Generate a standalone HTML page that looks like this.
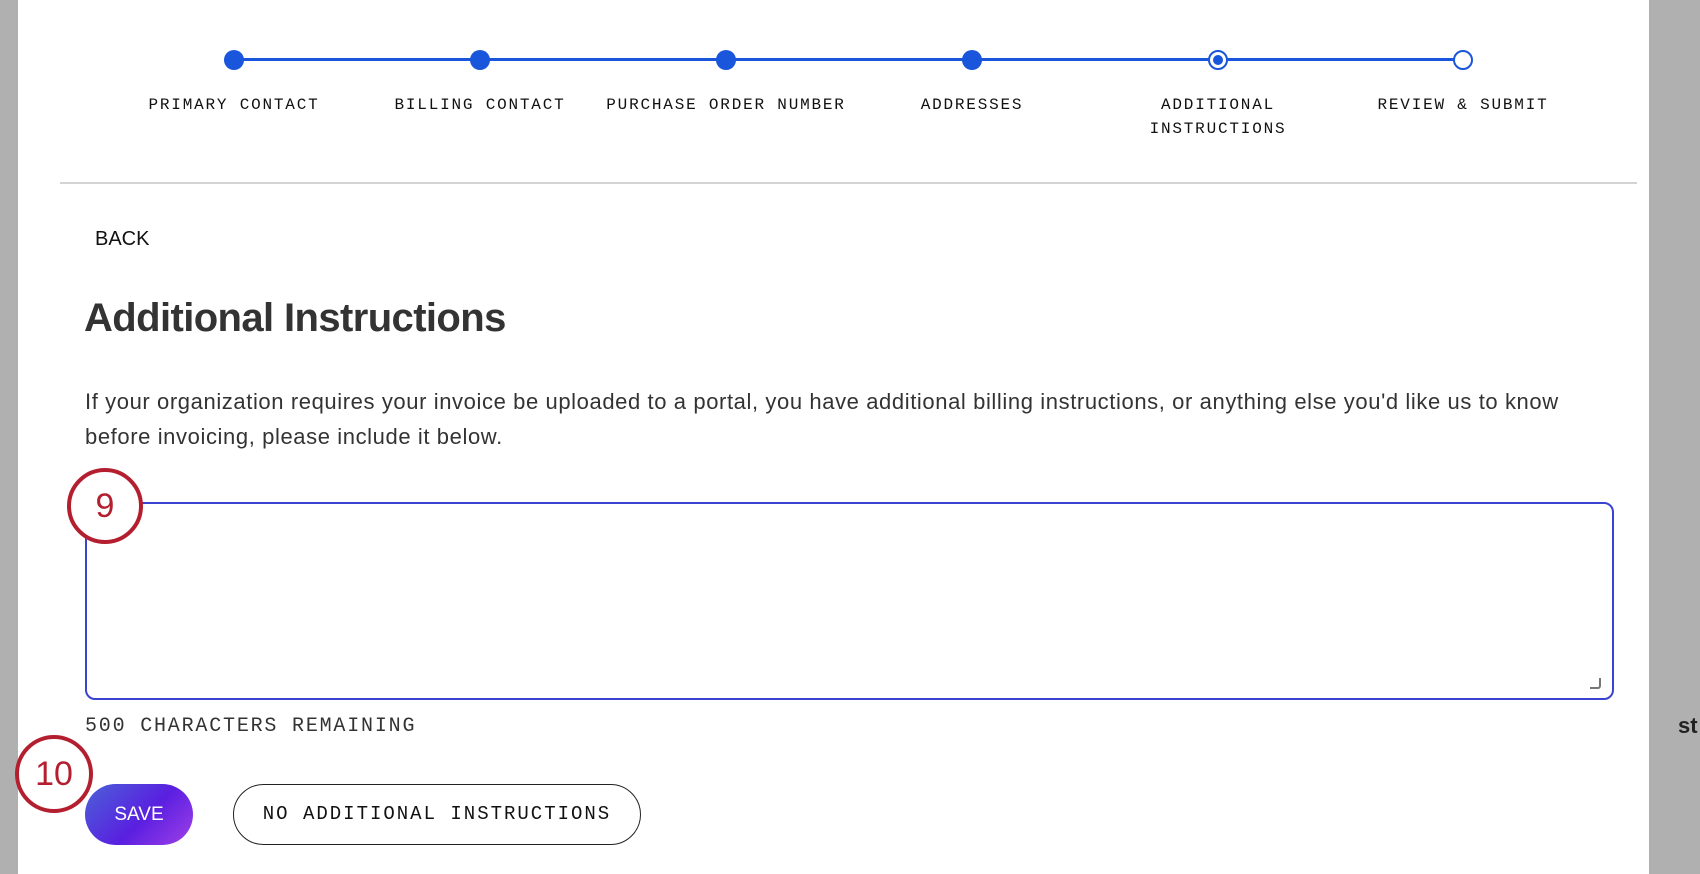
<!DOCTYPE html>
<html><head><meta charset="utf-8"><style>
body{margin:0;width:1700px;height:874px;overflow:hidden;background:#fff;position:relative;font-family:"Liberation Sans",sans-serif;color:#222}
.abs{position:absolute}
.gl{left:0;top:0;width:18px;height:874px;background:#b0b0b0}
.gr{left:1649px;top:0;width:51px;height:874px;background:#b0b0b0}
.dot{position:absolute;width:20px;height:20px;border-radius:50%;background:#1a56db;top:50px}
.lbl{position:absolute;font-family:"Liberation Mono",monospace;font-size:16px;text-align:center;width:260px;top:93px;line-height:24px;color:#111;letter-spacing:1.8px}
.circ{position:absolute;border:4px solid #b41f30;border-radius:50%;background:#fff;color:#b41f30;font-size:34px;text-align:center;font-family:"Liberation Sans",sans-serif}
</style></head><body>
<div class="abs gl"></div><div class="abs gr"></div>
<div class="abs" style="left:1678px;top:713px;font-weight:bold;font-size:22px;color:#222">st</div>
<div class="abs" style="left:234px;top:58px;width:1229px;height:3px;background:#1a56db"></div>
<div class="dot" style="left:224px"></div>
<div class="dot" style="left:470px"></div>
<div class="dot" style="left:716px"></div>
<div class="dot" style="left:962px"></div>
<div class="dot" style="left:1208px;background:#fff;border:2px solid #1a56db;width:16px;height:16px"><div style="margin:3px;width:10px;height:10px;border-radius:50%;background:#1a56db"></div></div>
<div class="dot" style="left:1453px;background:#fff;border:2px solid #1a56db;width:16px;height:16px"></div>
<div class="lbl" style="left:104px">PRIMARY CONTACT</div>
<div class="lbl" style="left:350px">BILLING CONTACT</div>
<div class="lbl" style="left:576px;width:300px">PURCHASE ORDER NUMBER</div>
<div class="lbl" style="left:842px">ADDRESSES</div>
<div class="lbl" style="left:1088px">ADDITIONAL<br>INSTRUCTIONS</div>
<div class="lbl" style="left:1333px">REVIEW &amp; SUBMIT</div>
<div class="abs" style="left:60px;top:182px;width:1577px;height:2px;background:#d4d4d4"></div>
<div class="abs" style="left:95px;top:228px;font-size:20px;color:#111">BACK</div>
<div class="abs" style="left:84px;top:296px;font-size:40px;font-weight:bold;letter-spacing:-0.6px;color:#333">Additional Instructions</div>
<div class="abs" style="left:85px;top:384px;width:1540px;font-size:22px;line-height:35px;color:#333;letter-spacing:0.6px">If your organization requires your invoice be uploaded to a portal, you have additional billing instructions, or anything else you'd like us to know before invoicing, please include it below.</div>
<div class="abs" style="left:85px;top:502px;width:1525px;height:194px;border:2px solid #3b44d0;border-radius:10px"></div>
<div class="abs" style="left:1590px;top:678px;width:9px;height:9px;border-right:2px solid #777;border-bottom:2px solid #777;border-bottom-right-radius:3px"></div>
<div class="circ" style="left:67px;top:468px;width:68px;height:68px;line-height:68px">9</div>
<div class="abs" style="left:85px;top:715px;font-family:'Liberation Mono',monospace;font-size:20px;color:#333;letter-spacing:1.8px">500 CHARACTERS REMAINING</div>
<div class="abs" style="left:85px;top:784px;width:108px;height:61px;border-radius:31px;background:linear-gradient(135deg,#4a62d8,#5a1fe0 55%,#a040e8);color:#fff;font-size:19px;line-height:61px;text-align:center">SAVE</div>
<div class="circ" style="left:15px;top:735px;width:70px;height:70px;line-height:70px;background:transparent">10</div>
<div class="abs" style="left:233px;top:784px;width:406px;height:59px;border:1.5px solid #222;border-radius:31px;font-family:'Liberation Mono',monospace;font-size:19px;line-height:59px;text-align:center;color:#111;letter-spacing:2px">NO ADDITIONAL INSTRUCTIONS</div>
</body></html>
